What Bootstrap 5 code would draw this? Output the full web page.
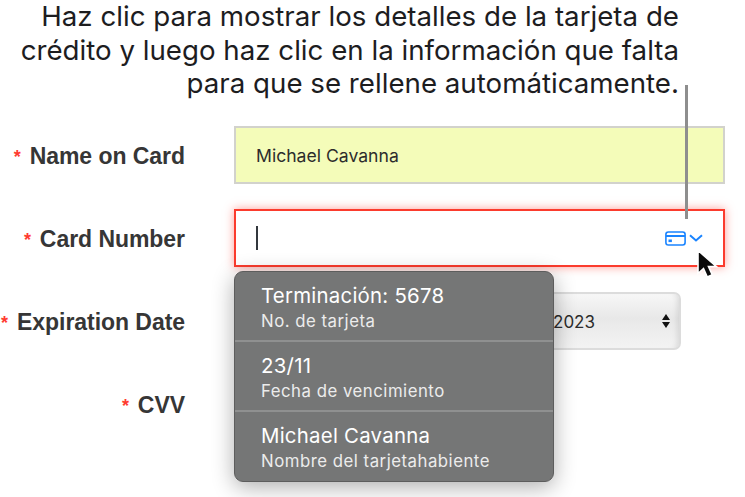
<!DOCTYPE html>
<html lang="es">
<head>
<meta charset="utf-8">
<title>Autorrelleno de tarjeta</title>
<link href="https://cdn.jsdelivr.net/npm/bootstrap@5.3.0/dist/css/bootstrap.min.css" rel="stylesheet">
<style>
html,body{height:100%;margin:0;background:#fff;overflow:hidden}
.stage{position:relative;width:745px;height:497px;font-family:"Liberation Sans",Arial,sans-serif}
.caption{margin:0;padding:0 66px 0 0;height:126px;padding-top:0;text-align:right;font-family:"Inter","Liberation Sans",sans-serif;font-size:27.7px;line-height:33.5px;color:#1d1d1f}
.frow{display:grid;grid-template-columns:185px 1fr;column-gap:49px;height:58px;margin-bottom:25px;padding-right:20px;align-items:center}
.flabel{margin:0;padding-top:2px;text-align:right;font-weight:700;font-size:23px;line-height:26px;color:#363636;letter-spacing:-.05px}
.req{color:#ff3b30;font-size:18px;margin-right:9px;vertical-align:1px}
.fbox{height:58px;display:flex;align-items:center;padding:0 20px;font-family:"Inter","Liberation Sans",sans-serif;font-size:17.6px;color:#2c2c2c}
.filled{background:#f4fcb9;border:2px solid #d2d2cc;padding-top:2px}
.invalid{background:#fff;border:2px solid #fb3b2d;box-shadow:0 0 9px rgba(255,59,48,.5);justify-content:space-between;padding-right:20px;padding-top:0}
.caret{width:2px;height:24px;background:#33383d}
.cardicons{display:flex;align-items:center;gap:3px}
.selectbox{height:58px;margin-right:44px;border:2px solid #dcdcdc;border-radius:7px;background:linear-gradient(#f7f7f7,#e8e8e8 45%,#f3f3f3);box-shadow:inset -6px 0 6px -5px rgba(0,0,0,.12);display:flex;justify-content:flex-end;align-items:center;padding-right:9px;gap:67px;font-family:"Inter","Liberation Sans",sans-serif;font-size:17px;color:#2c2c2c}
.selectbox span:first-child{padding-top:3px}
.updown{display:flex;flex-direction:column;gap:2px}
.updown i{display:block;width:0;height:0;border-left:4px solid transparent;border-right:4px solid transparent}
.updown i:first-child{border-bottom:6px solid #111}
.updown i:last-child{border-top:6px solid #111}
.leader{position:absolute;left:685px;top:85px;width:3px;height:134px;background:#8e8e8e}
.pointer{position:absolute;left:696px;top:249px}
.suggest{position:absolute;left:234px;top:271px;width:320px;height:211px;background:#757676;border:1px solid #5d5d5d;border-radius:9px;box-shadow:0 5px 22px rgba(0,0,0,.32);overflow:hidden;font-family:"Inter","Liberation Sans",sans-serif;color:#fff}
.sitem{height:70px;padding:9px 0 0 26px;border-bottom:2px solid #8f9090}
.sitem:last-child{border-bottom:0}
.smain{font-size:20.4px;line-height:30px;letter-spacing:.25px}
.ssub{font-size:16.8px;line-height:21px;color:#ececec;letter-spacing:.5px}
</style>
</head>
<body>
<div class="stage">
  <p class="caption">Haz clic para mostrar los detalles de la tarjeta de<br>crédito y luego haz clic en la información que falta<br>para que se rellene automáticamente.</p>
  <form>
    <div class="frow">
      <label class="flabel"><span class="req">*</span>Name on Card</label>
      <div class="fbox filled">Michael Cavanna</div>
    </div>
    <div class="frow">
      <label class="flabel"><span class="req">*</span>Card Number</label>
      <div class="fbox invalid">
        <span class="caret"></span>
        <span class="cardicons">
          <svg width="21" height="15" viewBox="0 0 21 15" fill="none" stroke="#1a84ff" stroke-width="1.6"><rect x=".9" y="1" width="19.2" height="13" rx="2.5"/><path d="M1 5h19" stroke-width="2"/><rect x="3.5" y="8.5" width="3.4" height="2.6" fill="#1a84ff" stroke="none"/></svg>
          <svg width="14" height="8" viewBox="0 0 14 8" fill="none" stroke="#1a84ff" stroke-width="2"><path d="M1 1.2l6 5.3 6-5.3"/></svg>
        </span>
      </div>
    </div>
    <div class="frow">
      <label class="flabel"><span class="req">*</span>Expiration Date</label>
      <div class="selectbox"><span>2023</span><span class="updown"><i></i><i></i></span></div>
    </div>
    <div class="frow">
      <label class="flabel"><span class="req">*</span>CVV</label>
      <div></div>
    </div>
  </form>
  <div class="leader"></div>
  <svg class="pointer" width="30" height="32" viewBox="0 0 30 32"><path d="M2 1.5v23l5.5-5 3.8 8.5 5-2.2-3.8-8.2h8z" fill="#0a0a0a" stroke="#fff" stroke-width="1.6"/></svg>
  <div class="suggest">
    <div class="sitem"><div class="smain">Terminación: 5678</div><div class="ssub">No. de tarjeta</div></div>
    <div class="sitem"><div class="smain">23/11</div><div class="ssub">Fecha de vencimiento</div></div>
    <div class="sitem"><div class="smain">Michael Cavanna</div><div class="ssub">Nombre del tarjetahabiente</div></div>
  </div>
</div>
<script src="https://cdn.jsdelivr.net/npm/bootstrap@5.3.0/dist/js/bootstrap.bundle.min.js"></script>
</body>
</html>
